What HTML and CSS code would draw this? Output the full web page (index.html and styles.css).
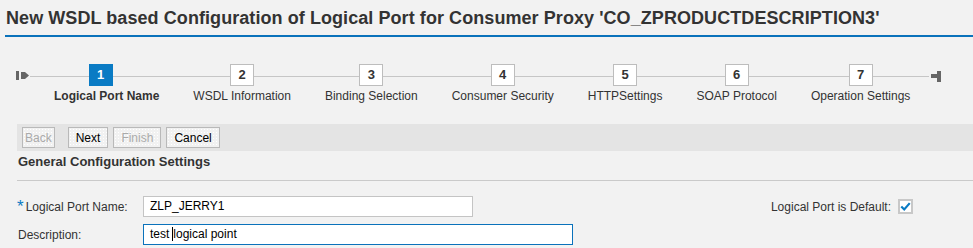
FILE: index.html
```html
<!DOCTYPE html>
<html lang="en">
<head>
    <meta charset="UTF-8">
    <title>New WSDL based Configuration of Logical Port</title>
    <link rel="stylesheet" href="styles.css">
</head>
<body>
    <h1 class="title">New WSDL based Configuration of Logical Port for Consumer Proxy 'CO_ZPRODUCTDESCRIPTION3'</h1>

    <!-- Roadmap -->
    <div class="roadmap">
        <svg class="rm-start" width="14" height="9" viewBox="0 0 14 9"><rect x="0" y="0" width="3" height="9" fill="#666"/><path d="M5 1 H9 L13 4.5 L9 8 H5 Z" fill="#666"/></svg>
        <ol class="rm-steps">
            <li class="step active"><span class="num">1</span><span class="label">Logical Port Name</span></li>
            <li class="step"><span class="num">2</span><span class="label">WSDL Information</span></li>
            <li class="step"><span class="num">3</span><span class="label">Binding Selection</span></li>
            <li class="step"><span class="num">4</span><span class="label">Consumer Security</span></li>
            <li class="step"><span class="num">5</span><span class="label">HTTPSettings</span></li>
            <li class="step"><span class="num">6</span><span class="label">SOAP Protocol</span></li>
            <li class="step"><span class="num">7</span><span class="label">Operation Settings</span></li>
        </ol>
        <svg class="rm-end" width="10" height="11" viewBox="0 0 10 11"><rect x="0" y="3" width="7" height="4" fill="#666"/><rect x="6" y="0" width="4" height="11" fill="#666"/></svg>
    </div>

    <!-- Toolbar -->
    <div class="toolbar">
        <button type="button" class="btn back" disabled>Back</button>
        <button type="button" class="btn">Next</button>
        <button type="button" class="btn" disabled>Finish</button>
        <button type="button" class="btn">Cancel</button>
    </div>

    <h2 class="section">General Configuration Settings</h2>

    <div class="form">
        <label class="lbl"><span class="req">*</span>Logical Port Name:</label>
        <div class="field w330">ZLP_JERRY1</div>
        <div class="opt">
            <span>Logical Port is Default:</span>
            <span class="check"><svg width="13" height="11" viewBox="0 0 13 11"><path d="M1.5 5.5 L5 9 L11.5 1.5" fill="none" stroke="#0a7bc4" stroke-width="2.6"/></svg></span>
        </div>

        <label class="lbl plain">Description:</label>
        <div class="field w430 focus">test<span class="caret"></span>logical point</div>
    </div>
</body>
</html>
```

FILE: styles.css
```css
body { margin: 0; background: #f2f2f2; font-family: "Liberation Sans", Arial, sans-serif; color: #333; }

.title { margin: 0 0 0 5px; padding: 8px 0 7px 1px; font-size: 18px; line-height: 20px; font-weight: bold; letter-spacing: 0.07px; color: #333; border-bottom: 2px solid #0a72bb; white-space: nowrap; }

.roadmap { display: flex; align-items: flex-start; margin: 27px 0 0 16px; }
.rm-start { margin-top: 7px; flex: none; }
.rm-end { margin-top: 7px; margin-left: 2px; flex: none; }
.rm-steps { list-style: none; margin: 0; padding: 0 2px 0 7px; display: flex; background: linear-gradient(#c6c6c6, #c6c6c6) no-repeat 0 12px / 100% 1px; }
.step { display: flex; flex-direction: column; align-items: center; padding: 0 17px; }
.num { box-sizing: border-box; width: 24px; height: 22px; border: 1px solid #bdbdbd; background: #fff; font-size: 13px; font-weight: bold; line-height: 20px; text-align: center; color: #333; }
.label { margin-top: 3px; font-size: 12px; line-height: 14px; color: #333; white-space: nowrap; }
.step.active .num { background: #0a7bc4; border-color: #0a7bc4; color: #fff; margin-right: 12px; }
.step.active .label { font-weight: bold; }

.toolbar { display: flex; gap: 5px; margin: 21px 0 0 17px; padding: 3px 5px; background: #e4e4e4; }
.btn { height: 21px; padding: 0 7px; font-family: inherit; font-size: 12px; color: #000; border: 1px solid #b9b9b9; background: #f1f1f1 radial-gradient(circle, #fff 0.6px, transparent 0.7px) 0 0 / 3px 3px; }
.btn:disabled { color: #aaa; }
.btn.back { padding: 0 2px; margin-right: 8px; }

.section { margin: 3px 0 0 17px; padding: 0 0 10px 1px; font-size: 13px; line-height: 16px; font-weight: bold; color: #333; border-bottom: 1px solid #cacaca; }

.form { display: grid; grid-template-columns: 126px auto 1fr; row-gap: 7px; align-items: center; margin: 15px 0 0 17px; }
.lbl { font-size: 12px; color: #333; display: flex; align-items: center; }
.lbl.plain { padding-left: 1px; }
.req { color: #0a7bc4; font-size: 17px; line-height: 12px; height: 12px; margin-right: 2px; }
.field { box-sizing: border-box; height: 21px; padding: 0 6px; border: 1px solid #c4c4c4; background: #fff; font-size: 12px; line-height: 19px; color: #000; }
.field.focus { border-color: #0a72bb; }
.w330 { width: 330px; }
.w430 { width: 430px; }
.caret { display: inline-block; width: 1px; height: 14px; margin: 0 0 0 3px; background: #000; vertical-align: -3px; }
.opt { justify-self: end; display: flex; align-items: center; gap: 7px; margin-right: 60px; font-size: 12px; color: #333; }
.check { box-sizing: border-box; width: 15px; height: 15px; border: 2px solid #c8c8c8; background: #fff; display: flex; align-items: center; justify-content: center; }
```
